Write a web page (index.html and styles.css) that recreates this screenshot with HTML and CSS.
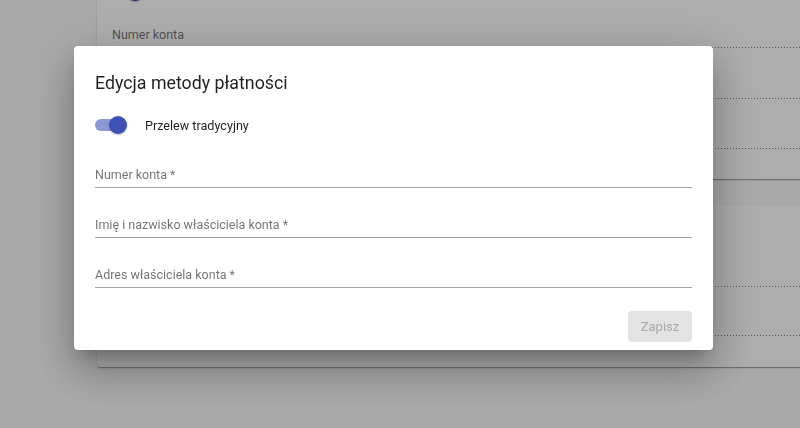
FILE: index.html
```html
<!DOCTYPE html>
<html lang="pl">
<head>
<meta charset="utf-8">
<title>Edycja metody płatności</title>
<link rel="stylesheet" href="styles.css">
</head>
<body>
<main class="page">
  <section class="card card-first">
    <div class="toggle-row">
      <span class="toggle"><span class="thumb"></span></span>
      <span class="toggle-label">Przelew tradycyjny</span>
    </div>
    <div class="field field-disabled field-first">
      <span class="field-label">Numer konta</span>
    </div>
    <div class="field field-disabled">
      <span class="field-label">&nbsp;</span>
    </div>
    <div class="field field-disabled">
      <span class="field-label">&nbsp;</span>
    </div>
  </section>
  <section class="card card-second">
    <div class="toggle-row">
      <span class="toggle"><span class="thumb"></span></span>
    </div>
    <div class="field field-disabled field-first-b">
      <span class="field-label">&nbsp;</span>
    </div>
    <div class="field field-disabled field-b">
      <span class="field-label">&nbsp;</span>
    </div>
  </section>
</main>

<div class="overlay">
  <div class="dialog" role="dialog">
    <h2 class="dialog-title">Edycja metody płatności</h2>
    <div class="toggle-row dialog-toggle">
      <span class="toggle"><span class="thumb"></span></span>
      <span class="toggle-label">Przelew tradycyjny</span>
    </div>
    <div class="field dialog-field-first">
      <span class="field-label">Numer konta *</span>
    </div>
    <div class="field">
      <span class="field-label">Imię i nazwisko właściciela konta *</span>
    </div>
    <div class="field">
      <span class="field-label">Adres właściciela konta *</span>
    </div>
    <div class="actions">
      <button class="btn" disabled>Zapisz</button>
    </div>
  </div>
</div>
</body>
</html>
```

FILE: styles.css
```css
* { box-sizing: border-box; }

html, body {
  margin: 0;
  padding: 0;
  height: 100%;
  overflow: hidden;
}

body {
  background: #fafafa;
  font-family: Roboto, "Noto Sans", "Liberation Sans", sans-serif;
  color: rgba(0, 0, 0, 0.87);
}

.page {
  display: flex;
  flex-direction: column;
  gap: 26px;
  padding-left: 97px;
  margin-top: -36px;
}

.card {
  width: 800px;
  background: #fff;
  border-radius: 4px;
  box-shadow: 0 2px 1px -1px rgba(0,0,0,.2), 0 1px 1px 0 rgba(0,0,0,.14), 0 1px 3px 0 rgba(0,0,0,.12);
  padding: 16px 15px 30px;
}

.card-second {
  padding-bottom: 31px;
}

/* toggle */
.toggle-row {
  display: flex;
  align-items: center;
  height: 24px;
}

.toggle {
  display: flex;
  align-items: center;
  justify-content: flex-end;
  width: 31px;
  height: 12px;
  border-radius: 6px;
  background: #8e98d4;
  flex: none;
}

.thumb {
  width: 18px;
  height: 18px;
  border-radius: 50%;
  background: #3f51b5;
  margin-right: -1px;
  box-shadow: 0 1px 2px rgba(0,0,0,.25);
  flex: none;
}

.toggle-label {
  margin-left: 19px;
  font-size: 12.6px;
  line-height: 24px;
  color: rgba(0, 0, 0, 0.87);
  padding-top: 2px;
}

/* fields */
.field {
  display: block;
  padding-bottom: 4px;
  border-bottom: 1px solid rgba(0, 0, 0, 0.36);
  margin-top: 29px;
}

.dialog-field-first { margin-top: 30px; }

.field-label {
  display: block;
  font-size: 12.5px;
  line-height: 16px;
  color: rgba(0, 0, 0, 0.56);
  white-space: nowrap;
}

.field-disabled {
  border-bottom: none;
  padding-bottom: 5px;
  background-image: linear-gradient(to right, rgba(0,0,0,.5) 0, rgba(0,0,0,.5) 1px, transparent 1px);
  background-size: 3px 1px;
  background-repeat: repeat-x;
  background-position: left bottom;
  margin-top: 29.5px;
}

.card .field-first { margin-top: 23px; }
.card .field-first-b { margin-top: 21px; }
.card .field-b { margin-top: 28px; }

/* overlay + dialog */
.overlay {
  position: fixed;
  inset: 0;
  background: rgba(0, 0, 0, 0.32);
  display: flex;
  align-items: flex-start;
  justify-content: flex-start;
  padding: 46px 0 0 74px;
}

.dialog {
  width: 639px;
  background: #fff;
  border-radius: 4px;
  padding: 25px 21px 8px;
  box-shadow: 0 11px 15px -7px rgba(0,0,0,.22), 0 24px 38px 3px rgba(0,0,0,.16), 0 9px 46px 8px rgba(0,0,0,.14);
}

.dialog-title {
  margin: 0;
  font-size: 17.8px;
  line-height: 24px;
  font-weight: 400;
  color: rgba(0, 0, 0, 0.87);
}

.dialog-toggle {
  margin-top: 18px;
}

.actions {
  display: flex;
  justify-content: flex-end;
  margin-top: 23px;
}

.btn {
  height: 31px;
  min-width: 64px;
  padding: 0 12px;
  border: none;
  border-radius: 4px;
  background: #e3e3e3;
  color: #a9a9a9;
  font-family: Roboto, "Noto Sans", "Liberation Sans", sans-serif;
  font-size: 13px;
  font-weight: 400;
  line-height: 31px;
}
```
